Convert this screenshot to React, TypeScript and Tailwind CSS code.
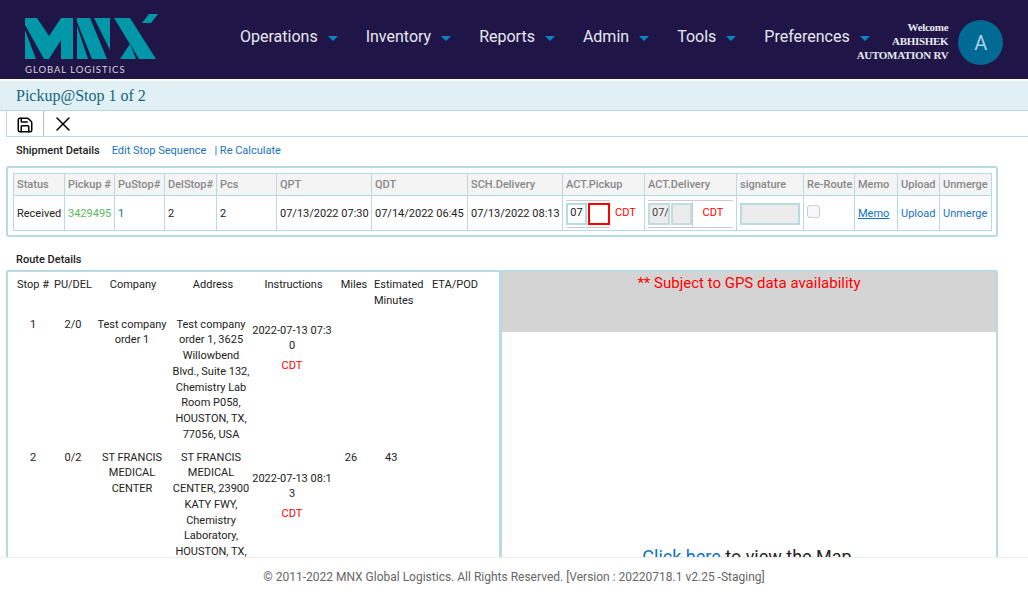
import { Save, X } from "lucide-react";

const navItems = ["Operations", "Inventory", "Reports", "Admin", "Tools", "Preferences"];

const Caret = () => (
  <svg width="10" height="5" viewBox="0 0 10 5" className="ml-[10px] mt-[2px]">
    <polygon points="0,0 10,0 5,5" fill="#0a84c6" />
  </svg>
);

const Logo = () => (
  <div className="w-[136px] shrink-0 self-start pt-[13px]">
    <svg width="136" height="48" viewBox="25 13 136 48" className="block">
      <g fill="#0097a9">
        <polygon points="25,30 36,59 25,59" />
        <polygon points="25,18 37,18 49,36 61,18 73,18 73,59 61,59 61,40 49,59 44,59 25,25" />
        <polygon points="77,26 88,59 77,59" />
        <polygon points="77,18 90,18 107,59 92,59 77,22" />
        <polygon points="94,18 110,18 110,50" />
        <polygon points="114,18 130,18 156,59 139,59" />
        <polygon points="120,59 130,44 136,59" />
        <polygon points="142,23 149,14 158,14 151,23" />
      </g>
    </svg>
    <div className="mt-[4px] whitespace-nowrap font-['Lato',sans-serif] text-[9.5px] leading-[10px] tracking-[0.95px] text-[#d5d5dc]">
      GLOBAL LOGISTICS
    </div>
  </div>
);

const Header = () => (
  <header className="flex h-[79px] shrink-0 items-center bg-[#1f1647] pl-[25px] pr-[25px]">
    <Logo />
    <nav className="ml-[79px] flex items-center gap-[28px] pb-[5px]">
      {navItems.map((item) => (
        <div key={item} className="flex items-center text-[16px] text-[#e8e8f0]">
          <span>{item}</span>
          <Caret />
        </div>
      ))}
    </nav>
    <div className="-ml-[13px] flex shrink-0 items-center gap-[10px] pt-[6px]">
      <div className="whitespace-nowrap pb-[4px] text-right font-['Liberation_Serif',serif] text-[11px] font-bold leading-[14px] tracking-[-0.3px] text-[#e8e8f0]">
        <div>Welcome</div>
        <div>ABHISHEK</div>
        <div>AUTOMATION RV</div>
      </div>
      <div className="flex h-[45px] w-[45px] shrink-0 items-center justify-center rounded-full bg-[#006a94] text-[20px] text-[#a8cfe6]">
        A
      </div>
    </div>
  </header>
);

const headCols = [
  ["Status", 51],
  ["Pickup #", 50],
  ["PuStop#", 50],
  ["DelStop#", 52],
  ["Pcs", 60],
  ["QPT", 95],
  ["QDT", 96],
  ["SCH.Delivery", 95],
  ["ACT.Pickup", 82],
  ["ACT.Delivery", 92],
  ["signature", 67],
  ["Re-Route", 51],
  ["Memo", 43],
  ["Upload", 42],
  ["Unmerge", 52],
] as const;

const cell = "border border-[#b7dbe2] px-[3px] pt-[2px] text-[11px] text-[#222] whitespace-nowrap align-middle";

const ShipmentTable = () => (
  <div className="ml-[6px] mr-[30px] rounded-[3px] border-[2px] border-[#b7dbe2] px-[5px] pb-[4px] pt-[5px]">
    <table className="table-fixed border-collapse" style={{ width: 978 }}>
      <colgroup>
        {headCols.map(([name, w]) => (
          <col key={name} style={{ width: w }} />
        ))}
      </colgroup>
      <thead>
        <tr className="h-[22px] bg-[#f4f4f4]">
          {headCols.map(([name]) => (
            <th key={name} className={`${cell} !pt-[1px] text-left font-medium !text-[#888]`}>
              {name}
            </th>
          ))}
        </tr>
      </thead>
      <tbody>
        <tr className="h-[35px]">
          <td className={cell}>Received</td>
          <td className={`${cell} !text-[#5cb85c]`}>3429495</td>
          <td className={`${cell} !text-[#1b6f8a]`}>1</td>
          <td className={cell}>2</td>
          <td className={cell}>2</td>
          <td className={cell}>07/13/2022 07:30</td>
          <td className={cell}>07/14/2022 06:45</td>
          <td className={cell}>07/13/2022 08:13</td>
          <td className={`${cell} !pt-[1px]`}>
            <div className="relative flex h-[28px] w-[44px] items-center border-y border-[#ccc]">
              <div className="flex h-[22px] w-[21px] items-center justify-center border-2 border-[#b7dbe2] text-[#222]">07</div>
              <div className="ml-[1px] h-[22px] w-[22px] border-2 border-[#f00]" />
              <span className="absolute left-[49px] text-[#f00]">CDT</span>
            </div>
          </td>
          <td className={`${cell} !pt-[1px]`}>
            <div className="flex h-[28px] w-[85px] items-center border-y border-[#ccc]">
              <div className="flex h-[22px] w-[22px] items-center overflow-hidden border-2 border-[#c5dcdf] bg-[#ececec] pl-[2px] text-[#444]">07/</div>
              <div className="ml-[1px] h-[22px] w-[21px] border-2 border-[#c5dcdf] bg-[#ececec]" />
              <span className="flex h-full flex-1 items-center justify-center border-l border-[#ccc] text-[#f00]">CDT</span>
            </div>
          </td>
          <td className={`${cell} !pt-[1px]`}>
            <div className="h-[22px] w-[60px] border-2 border-[#b7dbe2] bg-[#ececec]" />
          </td>
          <td className={`${cell} !pt-[9px] !align-top`}>
            <div className="h-[13px] w-[13px] rounded-[3px] border border-[#ccc] bg-[#f8f8f8]" />
          </td>
          <td className={cell}>
            <span className="text-[#0a72c2] underline">Memo</span>
          </td>
          <td className={`${cell} !text-[#1a73c0]`}>Upload</td>
          <td className={`${cell} !text-[#1a73c0]`}>Unmerge</td>
        </tr>
      </tbody>
    </table>
  </div>
);

const routeCols = [45, 40, 80, 79, 83, 38, 58, 64];

const routes = [
  {
    stop: "1",
    puDel: "2/0",
    company: "Test company order 1",
    address: "Test company order 1, 3625 Willowbend Blvd., Suite 132, Chemistry Lab Room P058, HOUSTON, TX, 77056, USA",
    instr: "2022-07-13 07:30",
    instrOffset: 6,
    miles: "",
    est: "",
  },
  {
    stop: "2",
    puDel: "0/2",
    company: "ST FRANCIS MEDICAL CENTER",
    address: "ST FRANCIS MEDICAL CENTER, 23900 KATY FWY, Chemistry Laboratory, HOUSTON, TX, 77094, USA",
    instr: "2022-07-13 08:13",
    instrOffset: 21,
    miles: "26",
    est: "43",
  },
];

const RouteTable = () => (
  <div className="h-[400px] w-[495px] shrink-0 overflow-hidden rounded-[2px] border-[2px] border-[#b7dbe2]">
    <table className="table-fixed border-collapse text-[11px] leading-[15.72px] text-[#222]" style={{ width: 487 }}>
      <colgroup>
        {routeCols.map((w, i) => (
          <col key={i} style={{ width: w }} />
        ))}
      </colgroup>
      <thead>
        <tr>
          <th className="pb-[24px] pl-[5px] pt-[5px] text-center align-top font-normal">Stop #</th>
          <th className="pt-[5px] text-center align-top font-normal">PU/DEL</th>
          <th className="pt-[5px] text-center align-top font-normal">Company</th>
          <th className="pl-[1px] pt-[5px] text-center align-top font-normal">Address</th>
          <th className="pt-[5px] text-center align-top font-normal">Instructions</th>
          <th className="pt-[5px] text-center align-top font-normal">Miles</th>
          <th className="pl-[1px] pt-[5px] text-left align-top font-normal">Estimated Minutes</th>
          <th className="pl-[1px] pt-[5px] text-left align-top font-normal">ETA/POD</th>
        </tr>
      </thead>
      <tbody>
        {routes.map((r) => (
          <tr key={r.stop} className="h-[133px]">
            <td className="pl-[5px] text-center align-top">{r.stop}</td>
            <td className="text-center align-top">{r.puDel}</td>
            <td className="pl-[1px] pr-[3px] text-center align-top">{r.company}</td>
            <td className="align-top">
              <div className="-ml-[2px] w-[80px] text-center">{r.address}</div>
            </td>
            <td className="align-top">
              <div className="w-[80px] break-all text-center" style={{ marginTop: r.instrOffset }}>
                {r.instr}
              </div>
              <div className="mt-[4px] w-[80px] text-center text-[#f00]">CDT</div>
            </td>
            <td className="pr-[6px] text-center align-top">{r.miles}</td>
            <td className="pl-[12px] align-top">{r.est}</td>
            <td />
          </tr>
        ))}
      </tbody>
    </table>
  </div>
);

const MapPanel = () => (
  <div className="-ml-[1px] flex h-[400px] w-[498px] shrink-0 flex-col rounded-[2px] border-[2px] border-[#b7dbe2]">
    <div className="h-[60px] bg-[#d4d4d4] text-center text-[15px] text-[#f00]">
      ** Subject to GPS data availability
    </div>
    <div className="pr-[4px] pt-[211px] text-center text-[18px] text-[#222]">
      <span className="text-[#0a72c2]">Click here</span> to view the Map
    </div>
  </div>
);

export default function App() {
  return (
    <div className="relative flex h-[595px] w-full flex-col overflow-hidden bg-white font-['Roboto',sans-serif]">
      <Header />
      <div className="mt-[2px] flex h-[30px] shrink-0 items-center border-b border-[#b7dbe2] bg-[#e1f0f4] pl-[16px] font-['Liberation_Serif',serif] text-[16px] text-[#14667e]">
        Pickup@Stop 1 of 2
      </div>
      <div className="ml-[6px] flex h-[26px] shrink-0 border-b border-l border-[#b7dbe2]">
        <div className="flex w-[37px] items-center justify-center border-r border-[#bbb]">
          <Save size={18} strokeWidth={2} className="mt-[2px] text-black" />
        </div>
        <div className="flex w-[37px] items-center justify-center">
          <X size={24} strokeWidth={1.5} className="text-black" />
        </div>
      </div>
      <div className="ml-[16px] mt-[7px] flex h-[15px] shrink-0 items-center text-[11px]">
        <span className="font-medium text-[#222]">Shipment Details</span>
        <span className="ml-[12px] text-[#1a73c0]">Edit Stop Sequence</span>
        <span className="ml-[8px] text-[#1a73c0]">| Re Calculate</span>
      </div>
      <div className="mt-[7px] shrink-0">
        <ShipmentTable />
      </div>
      <div className="ml-[16px] mt-[15px] h-[15px] shrink-0 text-[11px] font-medium leading-[15px] text-[#222]">
        Route Details
      </div>
      <div className="ml-[6px] mt-[3px] flex shrink-0">
        <RouteTable />
        <MapPanel />
      </div>
      <footer className="absolute inset-x-0 bottom-0 flex h-[38px] items-center justify-center border-t border-[#eee] bg-white text-[12px] text-[#666]">
        © 2011-2022 MNX Global Logistics. All Rights Reserved. [Version : 20220718.1 v2.25 -Staging]
      </footer>
    </div>
  );
}
